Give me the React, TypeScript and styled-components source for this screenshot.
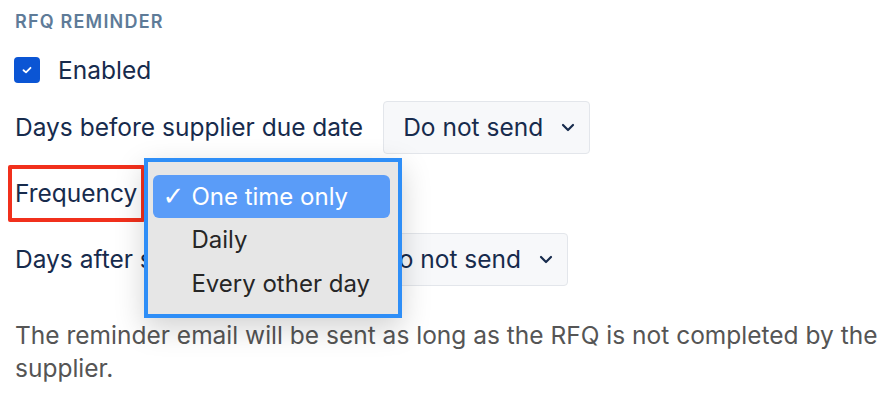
import React from "react";
import styled, { createGlobalStyle } from "styled-components";

const Global = createGlobalStyle`
  html, body { margin: 0; padding: 0; background: #ffffff; }
  body { font-family: Inter, "Noto Sans", sans-serif; -webkit-font-smoothing: antialiased; }
`;

const Page = styled.div`
  width: 892px;
  height: 400px;
  box-sizing: border-box;
  padding: 11px 15px 0 15px;
  display: flex;
  flex-direction: column;
  overflow: hidden;
`;

const Heading = styled.div`
  font-size: 18px;
  line-height: 22px;
  font-weight: 600;
  letter-spacing: 1.2px;
  color: #5e7b98;
  text-transform: uppercase;
`;

const CheckRow = styled.label`
  display: flex;
  align-items: center;
  gap: 18px;
  margin-top: 24px;
  height: 26px;
`;

const CheckBox = styled.span`
  width: 26px;
  height: 26px;
  border-radius: 4px;
  background: #0b55d4;
  display: flex;
  align-items: center;
  justify-content: center;
  margin-left: -1px;
`;

const Label = styled.span<{ $flagged?: boolean }>`
  position: relative;
  font-size: 24.5px;
  line-height: 28px;
  color: #172b4d;
  white-space: nowrap;
  &::after {
    content: "";
    display: ${(p) => (p.$flagged ? "block" : "none")};
    position: absolute;
    left: -7px;
    right: -8px;
    top: -14px;
    bottom: -15px;
    border: 4px solid #f1301c;
    border-radius: 2px;
  }
`;

const FieldRow = styled.div<{ $top: number }>`
  display: flex;
  align-items: center;
  gap: 20px;
  margin-top: ${(p) => p.$top}px;
  height: 52px;
`;

const Select = styled.div`
  position: relative;
  box-sizing: border-box;
  height: 53px;
  display: flex;
  align-items: center;
  gap: 18px;
  padding: 0 14px 0 19px;
  background: #f7f8fa;
  border: 1px solid #e3e6eb;
  border-radius: 4px;
  font-size: 24.5px;
  color: #172b4d;
  white-space: nowrap;
`;

const Popup = styled.div`
  position: absolute;
  left: -14px;
  top: -10px;
  width: 258px;
  height: 160px;
  box-sizing: border-box;
  border: 4px solid #2e8ef7;
  background: #e6e6e6;
  padding: 13px 8px 0 5px;
  box-shadow: 0 10px 28px rgba(0, 0, 0, 0.18);
  display: flex;
  flex-direction: column;
  z-index: 2;
`;

const Option = styled.div<{ $selected?: boolean }>`
  position: relative;
  height: 43px;
  box-sizing: border-box;
  padding-left: 38px;
  display: flex;
  align-items: center;
  border-radius: 6px;
  font-size: 24px;
  color: ${(p) => (p.$selected ? "#ffffff" : "#262626")};
  background: ${(p) => (p.$selected ? "#5a9cf8" : "transparent")};
  margin-bottom: 0.5px;
`;

const Tick = styled.span`
  position: absolute;
  left: 9px;
  top: 8px;
  font-size: 26px;
  line-height: 26px;
  font-family: "DejaVu Sans", sans-serif;
`;

const Note = styled.p`
  margin: 34px 0 0 0;
  font-size: 24.5px;
  line-height: 33px;
  color: #555555;
  width: 875px;
`;

const Chevron = () => (
  <svg width="14" height="9" viewBox="0 0 14 9">
    <path d="M2 2 L7 7 L12 2" fill="none" stroke="#172b4d" strokeWidth="2.2" strokeLinecap="round" strokeLinejoin="round" />
  </svg>
);

export default function App() {
  return (
    <Page>
      <Global />
      <Heading>RFQ Reminder</Heading>
      <CheckRow>
        <CheckBox>
          <svg width="12" height="10" viewBox="0 0 12 10">
            <path d="M2.5 5.2 L5 7.4 L9.5 2.8" fill="none" stroke="#fff" strokeWidth="1.8" strokeLinecap="round" strokeLinejoin="round" />
          </svg>
        </CheckBox>
        <Label>Enabled</Label>
      </CheckRow>
      <FieldRow $top={18}>
        <Label>Days before supplier due date</Label>
        <Select>
          Do not send
          <Chevron />
        </Select>
      </FieldRow>
      <FieldRow $top={14}>
        <Label $flagged>Frequency</Label>
        <Select>
          One time only
          <Chevron />
          <Popup>
            <Option $selected>
              <Tick>✓</Tick>One time only
            </Option>
            <Option>Daily</Option>
            <Option>Every other day</Option>
          </Popup>
        </Select>
      </FieldRow>
      <FieldRow $top={14}>
        <Label>Days after supplier due date</Label>
        <Select>
          Do not send
          <Chevron />
        </Select>
      </FieldRow>
      <Note>
        The reminder email will be sent as long as the RFQ is not completed by the supplier.
      </Note>
    </Page>
  );
}
